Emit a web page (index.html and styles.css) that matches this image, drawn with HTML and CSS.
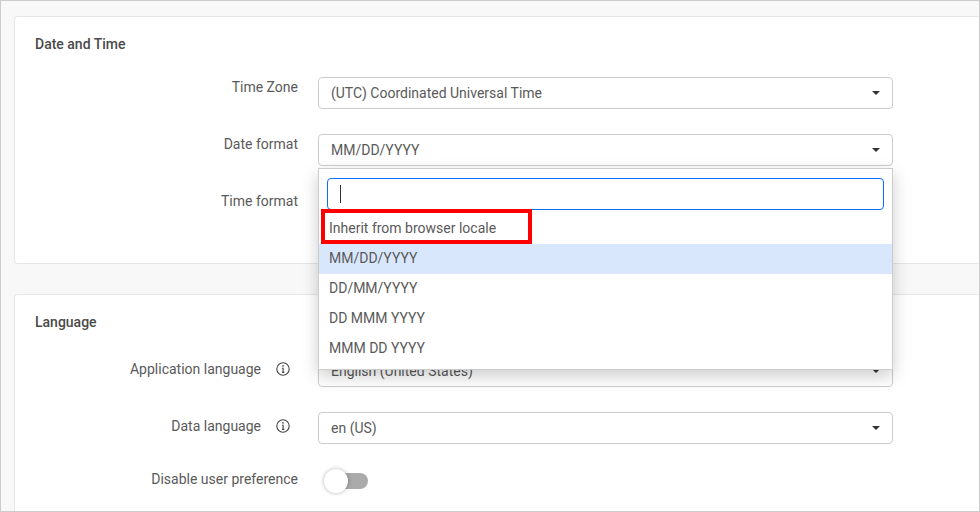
FILE: index.html
```html
<!DOCTYPE html>
<html lang="en">
<head>
    <meta charset="UTF-8">
    <meta name="viewport" content="width=device-width, initial-scale=1.0">
    <title>Settings</title>
    <link rel="stylesheet" href="styles.css">
</head>

<body>
    <div class="settings-page">
        <section class="settings-card date-card">
            <h2 class="settings-card-title">Date and Time</h2>
            <div class="settings-row">
                <div class="settings-label">Time Zone</div>
                <div class="select-box">
                    <span class="select-box-text">(UTC) Coordinated Universal Time</span>
                    <span class="select-box-arrow"></span>
                </div>
            </div>
            <div class="settings-row">
                <div class="settings-label">Date format</div>
                <div class="select-box">
                    <span class="select-box-text">MM/DD/YYYY</span>
                    <span class="select-box-arrow"></span>
                </div>
                <div class="select-menu">
                    <div class="select-menu-search"><span class="select-menu-caret"></span></div>
                    <div class="select-menu-item">Inherit from browser locale</div>
                    <div class="select-menu-item active">MM/DD/YYYY</div>
                    <div class="select-menu-item">DD/MM/YYYY</div>
                    <div class="select-menu-item">DD MMM YYYY</div>
                    <div class="select-menu-item">MMM DD YYYY</div>
                </div>
                <div class="red-mark"></div>
            </div>
            <div class="settings-row">
                <div class="settings-label">Time format</div>
            </div>
        </section>

        <section class="settings-card language-card">
            <h2 class="settings-card-title">Language</h2>
            <div class="settings-row">
                <div class="settings-label with-icon">
                    Application language
                    <svg class="info-icon" viewBox="0 0 14 14"><circle cx="7" cy="7" r="6.2" /><path d="M6 6.3H7.1V10.3M6 10.4H8.3" /><circle class="info-dot" cx="7" cy="3.9" r="0.8" /></svg>
                </div>
                <div class="select-box">
                    <span class="select-box-text">English (United States)</span>
                    <span class="select-box-arrow"></span>
                </div>
            </div>
            <div class="settings-row">
                <div class="settings-label with-icon">
                    Data language
                    <svg class="info-icon" viewBox="0 0 14 14"><circle cx="7" cy="7" r="6.2" /><path d="M6 6.3H7.1V10.3M6 10.4H8.3" /><circle class="info-dot" cx="7" cy="3.9" r="0.8" /></svg>
                </div>
                <div class="select-box">
                    <span class="select-box-text">en (US)</span>
                    <span class="select-box-arrow"></span>
                </div>
            </div>
            <div class="settings-row">
                <div class="settings-label">Disable user preference</div>
                <div class="toggle">
                    <div class="toggle-knob"></div>
                </div>
            </div>
        </section>
    </div>
</body>
</html>
```

FILE: styles.css
```css
* {
  box-sizing: border-box;
}

html,
body {
  margin: 0;
  height: 100%;
}

body {
  font-family: Roboto, "Liberation Sans", sans-serif;
  font-size: 14px;
  color: #5a5a5a;
}

.settings-page {
  height: 512px;
  padding: 15px 0 0 13px;
  background-color: #f8f8f8;
  border: 1px solid #ccc;
  overflow: hidden;
}

.settings-card {
  padding: 0 86px 0 20px;
  background-color: #fff;
  border: 1px solid #e6e6e6;
  border-right: 0;
  border-radius: 4px 0 0 4px;
}

.date-card {
  height: 248px;
  margin-bottom: 30px;
}

.language-card {
  height: 240px;
}

.settings-card-title {
  height: 60px;
  margin: 0;
  padding-top: 19px;
  font-size: 14px;
  line-height: 17px;
  font-weight: 500;
  color: #4a4a4a;
}

.settings-row {
  position: relative;
  display: flex;
  height: 57px;
  padding-bottom: 25px;
}

.settings-label {
  display: flex;
  justify-content: flex-end;
  width: 263px;
  margin-right: 20px;
  padding-top: 2px;
  line-height: 16px;
}

.settings-label.with-icon {
  padding-top: 6px;
}

.select-box {
  display: flex;
  align-items: center;
  justify-content: space-between;
  flex: 1;
  height: 32px;
  padding: 0 12px;
  background-color: #fff;
  border: 1px solid #ccc;
  border-radius: 4px;
}

.select-box-arrow {
  width: 0;
  height: 0;
  border-top: 4px solid #333;
  border-left: 4px solid transparent;
  border-right: 4px solid transparent;
}

.select-menu {
  position: absolute;
  top: 34px;
  left: 283px;
  right: 0;
  z-index: 2;
  height: 202px;
  padding: 9px 0 0;
  background-color: #fff;
  border: 1px solid #ccc;
  box-shadow: 0 6px 16px rgba(0, 0, 0, 0.2);
}

.select-menu-search {
  display: flex;
  align-items: center;
  height: 32px;
  margin: 0 8px 4px;
  padding-left: 12px;
  border: 1px solid #0d6efd;
  border-radius: 4px;
}

.select-menu-caret {
  width: 1px;
  height: 18px;
  background-color: #333;
}

.select-menu-item {
  height: 30px;
  padding: 0 10px;
  line-height: 29px;
}

.select-menu-item.active {
  background-color: #d9e7fd;
}

.red-mark {
  position: absolute;
  top: 75px;
  left: 286px;
  z-index: 3;
  width: 211px;
  height: 35px;
  border: 4px solid #f00;
}

.info-icon {
  width: 14px;
  height: 14px;
  margin: 1px 8px 0 15px;
  fill: none;
  stroke: #444;
  stroke-width: 1.1;
}

.info-dot {
  fill: #444;
  stroke: none;
}

.toggle {
  position: relative;
  width: 40px;
  height: 16px;
  margin: 4px 0 0 10px;
  background-color: #aaa;
  border-radius: 8px;
}

.toggle-knob {
  position: absolute;
  top: -4px;
  left: -4px;
  width: 24px;
  height: 24px;
  background-color: #fff;
  border-radius: 50%;
  box-shadow: 0 0 4px rgba(0, 0, 0, 0.3);
}
```
